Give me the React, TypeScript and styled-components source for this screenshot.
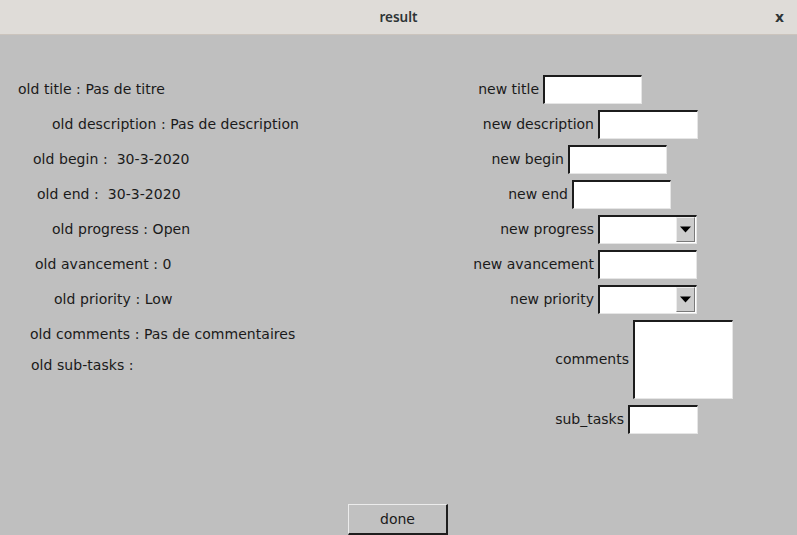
import React from "react";
import styled, { createGlobalStyle } from "styled-components";

const Global = createGlobalStyle`
  html, body { margin: 0; padding: 0; overflow: hidden; }
  body { background: #bfbfbf; }
  #root { height: 100vh; }
`;

const Window = styled.div`
  width: 797px;
  height: 535px;
  display: flex;
  flex-direction: column;
  background: #bfbfbf;
  font-family: "DejaVu Sans", "Liberation Sans", sans-serif;
  font-size: 14px;
  color: #1a1a1a;
  overflow: hidden;
`;

const TitleBar = styled.div`
  height: 34px;
  flex: none;
  background: #dfdcd8;
  border-bottom: 1px solid #cbc4bd;
  display: grid;
  grid-template-columns: 1fr auto 1fr;
  align-items: center;
`;

const Title = styled.div`
  grid-column: 2;
  font-family: "Noto Sans", "DejaVu Sans", sans-serif;
  font-weight: 600;
  font-size: 13.5px;
  color: #2e3436;
`;

const Close = styled.div`
  justify-self: end;
  margin-right: 13px;
  font-family: "DejaVu Sans", sans-serif;
  font-weight: 700;
  font-size: 14px;
  color: #2e3436;
`;

const Content = styled.div`
  height: 469px;
  flex: none;
  display: grid;
  grid-template-columns: 460px 1fr;
  padding-top: 37px;
  box-sizing: border-box;
`;

const Column = styled.div`
  display: flex;
  flex-direction: column;
`;

const OldRow = styled.div<{ $indent: number; $h?: number }>`
  height: ${(p) => p.$h ?? 35}px;
  box-sizing: border-box;
  padding-left: ${(p) => p.$indent}px;
  padding-bottom: 2px;
  display: flex;
  align-items: center;
  white-space: pre;
  letter-spacing: 0.05px;
`;

const NewRow = styled.div<{ $labelW: number; $h?: number }>`
  height: ${(p) => p.$h ?? 35}px;
  display: grid;
  grid-template-columns: ${(p) => p.$labelW}px auto;
  align-items: center;
  justify-items: start;
`;

const Label = styled.span`
  justify-self: end;
  padding-right: 4px;
  padding-bottom: 2px;
  white-space: pre;
`;

const Entry = styled.div<{ $w: number; $h?: number }>`
  width: ${(p) => p.$w}px;
  height: ${(p) => p.$h ?? 29}px;
  box-sizing: border-box;
  background: #ffffff;
  border-style: solid;
  border-width: 2px 1px 1px 2px;
  border-color: #1c1c1c #e6e6e6 #e6e6e6 #1c1c1c;
`;

const Combo = styled(Entry)`
  display: flex;
  justify-content: flex-end;
  align-items: stretch;
  padding: 0 1px 1px 0;
`;

const ArrowButton = styled.div`
  width: 19px;
  box-sizing: border-box;
  background: #cccccc;
  border-style: solid;
  border-width: 1px;
  border-color: #ececec #7a7a7a #7a7a7a #ececec;
  display: flex;
  align-items: center;
  justify-content: center;
`;

const Footer = styled.div`
  flex: 1;
  display: flex;
  justify-content: center;
  align-items: flex-start;
`;

const Button = styled.div`
  width: 100px;
  height: 31px;
  box-sizing: border-box;
  margin-left: -1px;
  background: #c1c1c1;
  border-style: solid;
  border-width: 1px 2px 2px 1px;
  border-color: #ececec #1e1e1e #1e1e1e #ececec;
  display: flex;
  align-items: center;
  justify-content: center;
  padding-bottom: 1px;
  color: #1a1a1a;
`;

const Arrow = () => (
  <svg width="11" height="7" viewBox="0 0 11 7">
    <path d="M0 0.5 L11 0.5 L5.5 6.5 Z" fill="#000" />
  </svg>
);

const oldRows: { text: string; indent: number; h?: number }[] = [
  { text: "old title : Pas de titre", indent: 18 },
  { text: "old description : Pas de description", indent: 52 },
  { text: "old begin :  30-3-2020", indent: 33 },
  { text: "old end :  30-3-2020", indent: 37 },
  { text: "old progress : Open", indent: 52 },
  { text: "old avancement : 0", indent: 35 },
  { text: "old priority : Low", indent: 54 },
  { text: "old comments : Pas de commentaires", indent: 30 },
  { text: "old sub-tasks :", indent: 31, h: 28 },
];

type NewField = {
  label: string;
  labelW: number;
  w: number;
  kind: "entry" | "combo" | "text";
  h?: number;
  rowH?: number;
};

const newRows: NewField[] = [
  { label: "new title", labelW: 83, w: 99, kind: "entry" },
  { label: "new description", labelW: 138, w: 100, kind: "entry" },
  { label: "new begin", labelW: 108, w: 99, kind: "entry" },
  { label: "new end", labelW: 112, w: 99, kind: "entry" },
  { label: "new progress", labelW: 138, w: 99, kind: "combo" },
  { label: "new avancement", labelW: 138, w: 99, kind: "entry" },
  { label: "new priority", labelW: 138, w: 99, kind: "combo" },
  { label: "comments", labelW: 173, w: 100, kind: "text", h: 79, rowH: 85 },
  { label: "sub_tasks", labelW: 168, w: 70, kind: "entry" },
];

export default function App() {
  return (
    <>
      <Global />
      <Window>
        <TitleBar>
          <Title>result</Title>
          <Close>x</Close>
        </TitleBar>
        <Content>
          <Column>
            {oldRows.map((r) => (
              <OldRow key={r.text} $indent={r.indent} $h={r.h}>
                {r.text}
              </OldRow>
            ))}
          </Column>
          <Column>
            {newRows.map((r) => (
              <NewRow key={r.label} $labelW={r.labelW} $h={r.rowH}>
                <Label>{r.label}</Label>
                {r.kind === "combo" ? (
                  <Combo $w={r.w}>
                    <ArrowButton>
                      <Arrow />
                    </ArrowButton>
                  </Combo>
                ) : (
                  <Entry $w={r.w} $h={r.h} />
                )}
              </NewRow>
            ))}
          </Column>
        </Content>
        <Footer>
          <Button>done</Button>
        </Footer>
      </Window>
    </>
  );
}
